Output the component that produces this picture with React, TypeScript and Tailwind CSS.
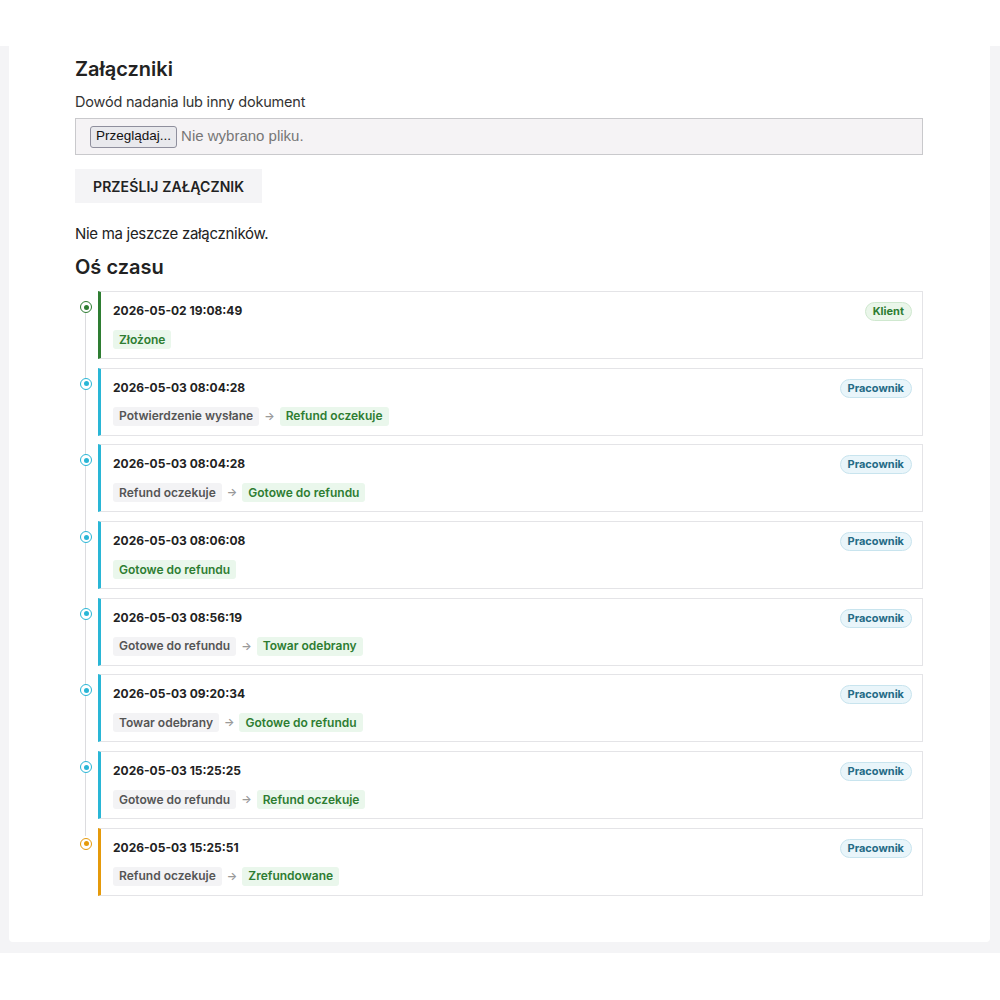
import React from "react";

type Tone = "green" | "cyan" | "orange";

type Entry = {
  date: string;
  from?: string;
  to: string;
  actor: "Klient" | "Pracownik";
  tone: Tone;
};

const ENTRIES: Entry[] = [
  { date: "2026-05-02 19:08:49", to: "Złożone", actor: "Klient", tone: "green" },
  { date: "2026-05-03 08:04:28", from: "Potwierdzenie wysłane", to: "Refund oczekuje", actor: "Pracownik", tone: "cyan" },
  { date: "2026-05-03 08:04:28", from: "Refund oczekuje", to: "Gotowe do refundu", actor: "Pracownik", tone: "cyan" },
  { date: "2026-05-03 08:06:08", to: "Gotowe do refundu", actor: "Pracownik", tone: "cyan" },
  { date: "2026-05-03 08:56:19", from: "Gotowe do refundu", to: "Towar odebrany", actor: "Pracownik", tone: "cyan" },
  { date: "2026-05-03 09:20:34", from: "Towar odebrany", to: "Gotowe do refundu", actor: "Pracownik", tone: "cyan" },
  { date: "2026-05-03 15:25:25", from: "Gotowe do refundu", to: "Refund oczekuje", actor: "Pracownik", tone: "cyan" },
  { date: "2026-05-03 15:25:51", from: "Refund oczekuje", to: "Zrefundowane", actor: "Pracownik", tone: "orange" },
];

const TONE_BORDER: Record<Tone, string> = {
  green: "border-l-[#2e7d32]",
  cyan: "border-l-[#29b6d6]",
  orange: "border-l-[#e59a0b]",
};

const TONE_DOT: Record<Tone, { ring: string; fill: string }> = {
  green: { ring: "border-[#2e7d32]", fill: "bg-[#2e7d32]" },
  cyan: { ring: "border-[#29b6d6]", fill: "bg-[#29b6d6]" },
  orange: { ring: "border-[#e59a0b]", fill: "bg-[#e59a0b]" },
};

function Dot({ tone }: { tone: Tone }) {
  const t = TONE_DOT[tone];
  return (
    <span className={`flex items-center justify-center w-[12px] h-[12px] rounded-full bg-white border-[1.5px] ${t.ring}`}>
      <span className={`w-[5px] h-[5px] rounded-full ${t.fill}`} />
    </span>
  );
}

function ActorBadge({ actor }: { actor: Entry["actor"] }) {
  const cls =
    actor === "Klient"
      ? "bg-[#eaf6ea] border-[#cfe8cf] text-[#2e7d32]"
      : "bg-[#e9f5fa] border-[#c8e4ee] text-[#246b86]";
  return (
    <span className={`inline-flex items-center h-[19px] px-[7px] rounded-full border text-[11px] font-bold leading-none ${cls}`}>
      {actor}
    </span>
  );
}

function TimelineItem({ entry }: { entry: Entry }) {
  return (
    <div className="relative flex">
      <div className="w-[23px] shrink-0 flex justify-start pl-[5px] pt-[10px]">
        <Dot tone={entry.tone} />
      </div>
      <div className={`flex-1 bg-white border border-[#e4e4e7] border-l-[3px] ${TONE_BORDER[entry.tone]} pl-[12px] pr-[10px] pt-[10px] pb-[9px]`}>
        <div className="flex items-start justify-between h-[18px]">
          <span className="text-[12px] leading-[18px] font-bold text-[#222]">{entry.date}</span>
          <ActorBadge actor={entry.actor} />
        </div>
        <div className="mt-[10px] flex items-center gap-[5px] text-[12px] font-semibold leading-none">
          {entry.from && (
            <>
              <span className="inline-flex items-center h-[19px] px-[6px] rounded-[3px] bg-[#f3f3f5] text-[#555]">
                {entry.from}
              </span>
              <span className="text-[#999] text-[11px]">→</span>
            </>
          )}
          <span className="inline-flex items-center h-[19px] px-[6px] rounded-[3px] bg-[#eaf7ec] text-[#2e7d32]">
            {entry.to}
          </span>
        </div>
      </div>
    </div>
  );
}

export default function App() {
  return (
    <div className="min-h-screen bg-white text-[#222]" style={{ fontFamily: "Inter, 'Noto Sans', sans-serif" }}>
      <div className="pt-[46px]">
        <div className="bg-[#f4f4f6] pl-[9px] pr-[10px] pb-[11px]">
          <div className="bg-white rounded-b-[4px] pl-[66px] pr-[67px] pt-[10px] pb-[46px]">
            <h2 className="text-[20px] leading-[26px] font-semibold text-[#222]">Załączniki</h2>
            <label className="block mt-[11px] text-[14.5px] leading-[18px] text-[#333] tracking-[-0.2px]">
              Dowód nadania lub inny dokument
            </label>
            <div className="mt-[7px] h-[37px] flex items-center gap-[4px] bg-[#f5f3f5] border border-[#c9c9cc] pl-[14px]">
              <span
                className="inline-flex items-center h-[22px] px-[5px] rounded-[3px] border border-[#8f8f9d] bg-[#e9e9ed] text-[13.5px] text-[#111]"
                style={{ fontFamily: "'Liberation Sans', Arial, sans-serif" }}
              >
                Przeglądaj...
              </span>
              <span className="text-[15px] text-[#777]" style={{ fontFamily: "'Liberation Sans', Arial, sans-serif" }}>
                Nie wybrano pliku.
              </span>
            </div>
            <button className="mt-[14px] h-[34px] px-[18px] bg-[#f4f4f6] text-[14px] font-semibold text-[#222] tracking-[0.1px]">
              PRZEŚLIJ ZAŁĄCZNIK
            </button>
            <p className="mt-[20px] text-[15px] leading-[22px] text-[#222] tracking-[-0.3px]">Nie ma jeszcze załączników.</p>
            <h2 className="mt-[9px] text-[20px] leading-[26px] font-semibold text-[#222]">Oś czasu</h2>
            <div className="relative mt-[11px] flex flex-col gap-[8.7px]">
              <div className="absolute left-[10px] top-[12px] bottom-[60px] w-px bg-[#dcdcdf]" />
              {ENTRIES.map((e, i) => (
                <TimelineItem key={i} entry={e} />
              ))}
            </div>
          </div>
        </div>
      </div>
    </div>
  );
}
